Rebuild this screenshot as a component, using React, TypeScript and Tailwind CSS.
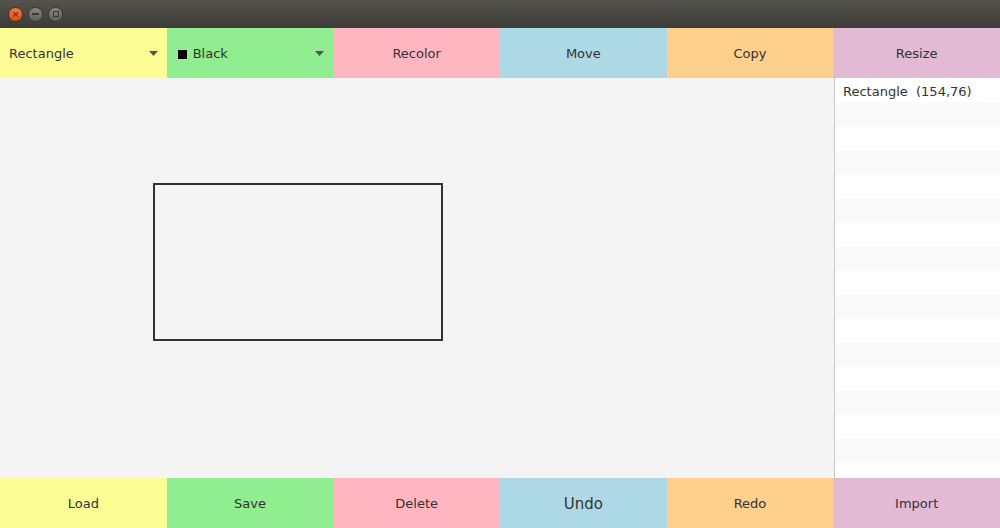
import React from "react";

const font = { fontFamily: '"DejaVu Sans", "Liberation Sans", sans-serif' };

const Arrow = () => (
  <svg width="9" height="6" viewBox="0 0 9 6">
    <path d="M0 0 L9 0 L4.5 5 Z" fill="#555" />
  </svg>
);

const ToolButton = ({ label, bg, big }: { label: string; bg: string; big?: boolean }) => (
  <div className={`min-w-0 flex items-center justify-center pt-[2px] text-[#333] ${big ? "text-[15px]" : "text-[13px]"} ${bg}`}>
    {label}
  </div>
);

export default function App() {
  const rows = Array.from({ length: 17 });
  return (
    <div className="w-[1000px] h-[528px] flex flex-col overflow-hidden bg-[#f4f4f4]" style={font}>
      {/* title bar */}
      <div className="h-[28px] shrink-0 flex items-center gap-[5px] px-[8px] bg-gradient-to-b from-[#55534d] to-[#3d3c38]">
        <div className="w-[15px] h-[15px] rounded-full bg-gradient-to-b from-[#f47a4a] to-[#dd4814] border border-[#5a2a18] flex items-center justify-center text-[9px] leading-none text-[#3a1a0a]">
          ×
        </div>
        <div className="w-[15px] h-[15px] rounded-full bg-gradient-to-b from-[#8a8984] to-[#5e5d59] border border-[#3a3936] flex items-center justify-center">
          <div className="w-[7px] h-[1.5px] bg-[#3a3936]" />
        </div>
        <div className="w-[15px] h-[15px] rounded-full bg-gradient-to-b from-[#8a8984] to-[#5e5d59] border border-[#3a3936] flex items-center justify-center">
          <div className="w-[6px] h-[6px] border border-[#3a3936]" />
        </div>
      </div>

      {/* top toolbar */}
      <div className="h-[50px] shrink-0 grid grid-cols-6">
        <div className="min-w-0 flex items-center justify-between pt-[2px] pl-[9px] pr-[9px] bg-[#fdfd96] text-[13px] text-[#333]">
          <span>Rectangle</span>
          <Arrow />
        </div>
        <div className="min-w-0 flex items-center justify-between pt-[2px] pl-[10px] pr-[9px] bg-[#90ee90] text-[13px] text-[#333]">
          <span className="flex items-center gap-[5px]">
            <span className="w-[11px] h-[11px] bg-black border border-[#ccc]" />
            Black
          </span>
          <Arrow />
        </div>
        <ToolButton label="Recolor" bg="bg-[#ffb6c1]" />
        <ToolButton label="Move" bg="bg-[#add8e6]" />
        <ToolButton label="Copy" bg="bg-[#fed08b]" />
        <ToolButton label="Resize" bg="bg-[#e2bad3]" />
      </div>

      {/* middle */}
      <div className="flex-1 flex min-h-0">
        <div className="flex-1 relative bg-[#f4f4f4]">
          <div className="absolute left-[153px] top-[105px] w-[290px] h-[158px] border-[2px] border-[#333]" />
        </div>
        <div className="w-[166px] border-l border-[#c8c8c8] bg-white flex flex-col pt-[1px] overflow-hidden">
          {rows.map((_, i) => (
            <div key={i} className={`h-[24px] shrink-0 flex items-center pl-[8px] pt-[1px] text-[13px] text-[#333] ${i % 2 ? "bg-[#f9f9f9]" : "bg-white"}`}>
              {i === 0 ? "Rectangle\u00a0\u00a0(154,76)" : ""}
            </div>
          ))}
        </div>
      </div>

      {/* bottom toolbar */}
      <div className="h-[50px] shrink-0 grid grid-cols-6">
        <ToolButton label="Load" bg="bg-[#fdfd96]" />
        <ToolButton label="Save" bg="bg-[#90ee90]" />
        <ToolButton label="Delete" bg="bg-[#ffb6c1]" />
        <ToolButton label="Undo" bg="bg-[#add8e6]" big />
        <ToolButton label="Redo" bg="bg-[#fed08b]" />
        <ToolButton label="Import" bg="bg-[#e2bad3]" />
      </div>
    </div>
  );
}
